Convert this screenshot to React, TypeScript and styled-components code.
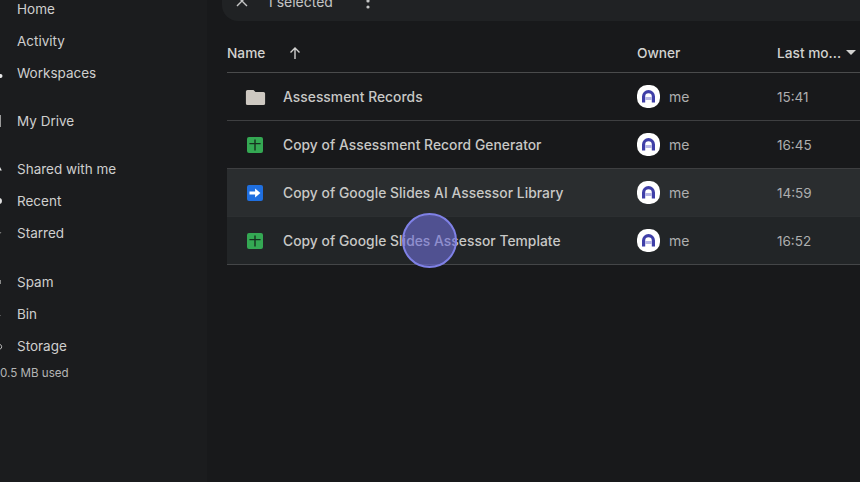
import React from "react";
import styled, { createGlobalStyle } from "styled-components";

const Global = createGlobalStyle`
  html, body { margin: 0; padding: 0; background: #18191b; }
  body { font-family: "Inter", "Liberation Sans", sans-serif; }
`;

const Page = styled.div`
  position: relative;
  display: flex;
  width: 860px;
  height: 482px;
  overflow: hidden;
  background: #18191b;
`;

const Sidebar = styled.aside`
  flex: 0 0 207px;
  background: #1b1c1e;
  display: flex;
  flex-direction: column;
  margin-top: -7px;
`;

const NavGroup = styled.nav`
  display: flex;
  flex-direction: column;
  margin-bottom: ${(p: { $gap?: number }) => p.$gap ?? 16}px;
`;

const NavItem = styled.div`
  display: flex;
  align-items: center;
  height: 32px;
  color: #cfcfce;
  font-size: 13.5px;
  font-weight: 400;
`;

const NavMark = styled.span`
  flex: 0 0 17px;
  height: 32px;
  display: block;
`;

const Used = styled.div`
  color: #b4b5b5;
  font-size: 11.6px;
  margin-top: 3px;
  height: 16px;
  line-height: 16px;
`;

const Main = styled.main`
  flex: 1;
  min-width: 0;
  display: flex;
  flex-direction: column;
  padding-left: 15px;
`;

const SelectionBar = styled.div`
  display: flex;
  align-items: center;
  height: 40px;
  margin-top: -19px;
  padding-left: 13px;
  background: #202224;
  border-radius: 16px 0 0 16px;
  color: #c4c5c5;
  font-size: 14px;
  flex: none;
`;

const SelectedText = styled.span`
  margin-left: 18px;
`;

const MoreBtn = styled.span`
  display: flex;
  margin-left: 33px;
`;

const Table = styled.div`
  margin: 12px 0 0 5px;
  display: flex;
  flex-direction: column;
`;

const HeaderRow = styled.div`
  display: grid;
  grid-template-columns: 410px 140px 1fr;
  align-items: center;
  height: 39px;
  border-bottom: 1px solid #4a4b4c;
  color: #d2d2d0;
  font-size: 13.7px;
  font-weight: 500;
`;

const HeaderCell = styled.div`
  display: flex;
  align-items: center;
`;

const SortArrow = styled.span`
  display: flex;
  margin-left: 22px;
`;

const Caret = styled.span`
  display: block;
  margin-left: 5px;
  width: 0;
  height: 0;
  border-left: 5.5px solid transparent;
  border-right: 5.5px solid transparent;
  border-top: 5px solid #d2d2d0;
`;

const Row = styled.div<{ $bg?: string }>`
  display: grid;
  grid-template-columns: 410px 140px 1fr;
  align-items: center;
  height: 47px;
  background: ${(p) => p.$bg ?? "transparent"};
  border-bottom: 1px solid ${(p) => (p.$bg ? "#2c2f31" : "#3e3f41")};
  &:last-child { border-bottom-color: #444648; }
`;

const NameCell = styled.div`
  display: flex;
  align-items: center;
  padding-left: 20px;
  gap: 20px;
  color: #c8c8c6;
  font-size: 13.8px;
  font-weight: 500;
  letter-spacing: 0.05px;
  white-space: nowrap;
`;

const FileIcon = styled.svg`
  flex: 0 0 16px;
  width: 16px;
  height: 16px;
  display: block;
`;

const OwnerCell = styled.div`
  display: flex;
  align-items: center;
  gap: 9px;
  color: #aeafaf;
  font-size: 14px;
`;

const Avatar = styled.svg`
  width: 23px;
  height: 23px;
  display: block;
`;

const TimeCell = styled.div`
  color: #aeafaf;
  font-size: 13.5px;
`;

const CursorHalo = styled.div`
  position: absolute;
  left: 402px;
  top: 213px;
  width: 55px;
  height: 55px;
  box-sizing: border-box;
  border-radius: 50%;
  background: rgba(108, 108, 212, 0.62);
  border: 2px solid #7f81e6;
`;

const Folder = () => (
  <FileIcon viewBox="0 0 20 16" style={{ width: 21, flexBasis: 21, marginLeft: -2, marginRight: -3 }}>
    <path d="M2 1h6l2 2h8a1.6 1.6 0 0 1 1.6 1.6v9.8A1.6 1.6 0 0 1 18 16H2a1.6 1.6 0 0 1-1.6-1.6V2.6A1.6 1.6 0 0 1 2 1z" fill="#cdc8c1" />
  </FileIcon>
);

const Sheet = () => (
  <FileIcon viewBox="0 0 16 16">
    <rect width="16" height="16" rx="2" fill="#34a853" />
    <path d="M2.4 6.6h11.2M8 2.4V13.6" stroke="#16301f" strokeWidth="1.4" fill="none" />
  </FileIcon>
);

const Script = () => (
  <FileIcon viewBox="0 0 16 16">
    <rect width="16" height="16" rx="2" fill="#1f6fe0" />
    <path d="M2.5 6.4h5.6V3.6L13.4 8l-5.3 4.4V9.6H2.5z" fill="#fff" />
  </FileIcon>
);

const Account = () => (
  <Avatar viewBox="0 0 23 23">
    <rect width="23" height="23" rx="10" fill="#ffffff" />
    <path d="M5 17.5v-6a6.5 6.5 0 0 1 13 0v6h-3.2v-6a3.3 3.3 0 0 0-6.6 0v6z" fill="#3f3fa8" />
    <rect x="8.2" y="12" width="6.6" height="3" fill="#b6b6e6" />
  </Avatar>
);

const mark = (d: React.ReactNode) => (
  <svg width="17" height="32" viewBox="0 0 17 32" style={{ display: "block" }}>{d}</svg>
);

const nav: { label: string; mark?: React.ReactNode }[][] = [
  [
    { label: "Home" },
    { label: "Activity" },
    { label: "Workspaces", mark: <circle cx="0.5" cy="19" r="2" fill="#e8e8e8" /> },
  ],
  [{ label: "My Drive", mark: <rect x="0" y="10" width="1" height="12" fill="#9a9a9a" /> }],
  [
    { label: "Shared with me", mark: <path d="M0 14l1.8 3.5H0z" fill="#e8e8e8" /> },
    { label: "Recent", mark: <circle cx="-1" cy="16" r="3" fill="#e0e0e0" /> },
    { label: "Starred", mark: <path d="M0 15h1.5L0 17z" fill="#777" /> },
  ],
  [
    { label: "Spam", mark: <rect x="0" y="14" width="1" height="4" fill="#888" /> },
    { label: "Bin", mark: <rect x="0" y="17" width="1" height="1" fill="#555" /> },
    { label: "Storage", mark: <path d="M0 14.5a2.4 2.4 0 0 1 0 4.6" stroke="#bbb" strokeWidth="1" fill="none" /> },
  ],
];

const rows = [
  { name: "Assessment Records", icon: <Folder />, time: "15:41" },
  { name: "Copy of Assessment Record Generator", icon: <Sheet />, time: "16:45" },
  { name: "Copy of Google Slides AI Assessor Library", icon: <Script />, time: "14:59", bg: "#2a2d2f" },
  { name: "Copy of Google Slides Assessor Template", icon: <Sheet />, time: "16:52", bg: "#222527" },
];

export default function App() {
  return (
    <Page>
      <Global />
      <Sidebar>
        {nav.map((group, i) => (
          <NavGroup key={i} $gap={i === 3 ? 0 : i === 2 ? 17 : 16}>
            {group.map((it) => (
              <NavItem key={it.label}>
                <NavMark>{it.mark && mark(it.mark)}</NavMark>
                {it.label}
              </NavItem>
            ))}
          </NavGroup>
        ))}
        <Used>0.5 MB used</Used>
      </Sidebar>
      <Main>
        <SelectionBar>
          <svg width="14" height="14" viewBox="0 0 14 14">
            <path d="M2 2l10 10M12 2L2 12" stroke="#c4c5c5" strokeWidth="1.4" fill="none" />
          </svg>
          <SelectedText>1 selected</SelectedText>
          <MoreBtn>
            <svg width="4" height="16" viewBox="0 0 4 16">
              <circle cx="2" cy="2" r="1.6" fill="#c4c5c5" />
              <circle cx="2" cy="8" r="1.6" fill="#c4c5c5" />
              <circle cx="2" cy="14" r="1.6" fill="#c4c5c5" />
            </svg>
          </MoreBtn>
        </SelectionBar>
        <Table>
          <HeaderRow>
            <HeaderCell>
              Name
              <SortArrow>
                <svg width="16" height="16" viewBox="0 0 16 16">
                  <path d="M8 14V3M3.5 7.5L8 3l4.5 4.5" stroke="#d2d2d0" strokeWidth="1.4" fill="none" />
                </svg>
              </SortArrow>
            </HeaderCell>
            <HeaderCell>Owner</HeaderCell>
            <HeaderCell>
              Last mo...
              <Caret />
            </HeaderCell>
          </HeaderRow>
          {rows.map((r) => (
            <Row key={r.name} $bg={r.bg}>
              <NameCell>
                {r.icon}
                {r.name}
              </NameCell>
              <OwnerCell>
                <Account />
                me
              </OwnerCell>
              <TimeCell>{r.time}</TimeCell>
            </Row>
          ))}
        </Table>
      </Main>
      <CursorHalo />
    </Page>
  );
}
